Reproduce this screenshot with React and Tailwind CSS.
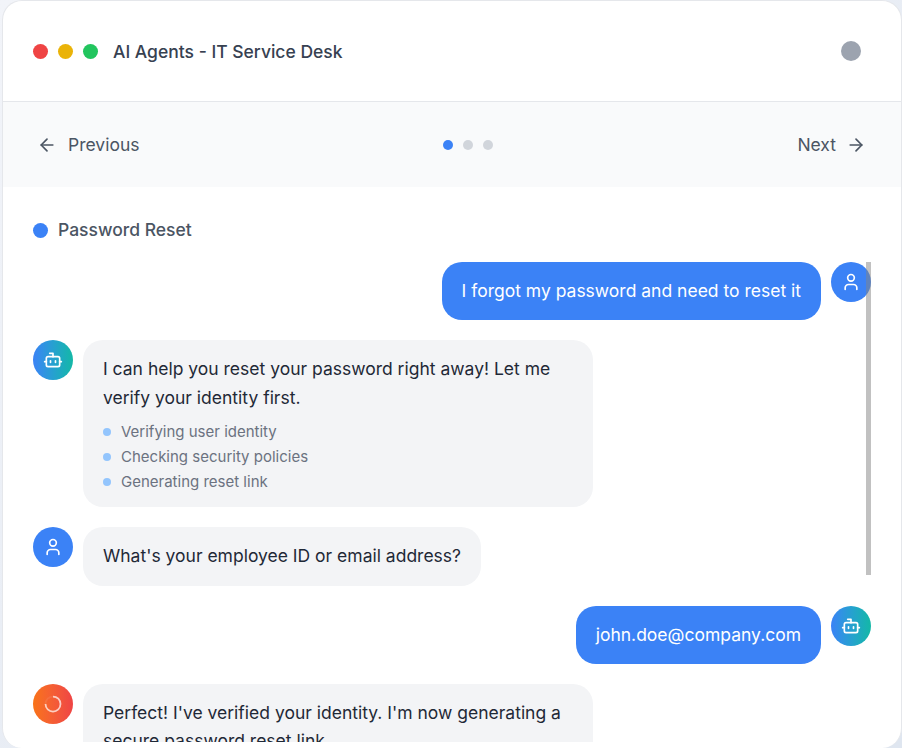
import { ArrowLeft, ArrowRight, Bot, User } from 'lucide-react';

const Avatar = ({ kind }) => {
  if (kind === 'bot') {
    return (
      <div className="w-10 h-10 shrink-0 rounded-full bg-gradient-to-r from-[#3b82f6] to-[#14b8a6] flex items-center justify-center text-white">
        <Bot className="w-5 h-5" strokeWidth={2} />
      </div>
    );
  }
  if (kind === 'busy') {
    return (
      <div className="w-10 h-10 shrink-0 rounded-full bg-gradient-to-r from-[#f97316] to-[#ef4444] flex items-center justify-center">
        <svg className="w-5 h-5" viewBox="0 0 20 20" fill="none">
          <circle cx="10" cy="10" r="7.5" stroke="white" strokeOpacity="0.08" strokeWidth="1.75" />
          <path d="M10 2.5a7.5 7.5 0 1 1-7.5 7.5" stroke="white" strokeOpacity="0.68" strokeWidth="1.75" />
        </svg>
      </div>
    );
  }
  return (
    <div className="w-10 h-10 shrink-0 rounded-full bg-[#3b82f6] flex items-center justify-center text-white">
      <User className="w-5 h-5" strokeWidth={2} />
    </div>
  );
};

const Sent = ({ avatar, children }) => (
  <div className="flex justify-end gap-[10px]">
    <div className="bg-[#3b82f6] text-white rounded-[20px] px-5 py-[15px]">{children}</div>
    <Avatar kind={avatar} />
  </div>
);

const Received = ({ avatar, children, className = '' }) => (
  <div className="flex gap-[10px]">
    <Avatar kind={avatar} />
    <div className={`bg-[#f3f4f6] text-[#1f2937] rounded-[20px] px-5 py-[15px] ${className}`}>{children}</div>
  </div>
);

const Step = ({ children }) => (
  <li className="flex items-center gap-[10px] h-[25px] text-[15px] text-[#6b7280]">
    <span className="w-2 h-2 rounded-full bg-[#93c5fd]" />
    {children}
  </li>
);

export default function App() {
  return (
    <div className="h-[748px] overflow-hidden bg-gradient-to-br from-[#f2f4f9] to-[#dfe6f0] pl-[2px] font-['Inter',sans-serif] text-[17.5px] leading-[28.16px]">
      <div className="relative h-[748px] bg-white rounded-[20px] border border-b-0 border-[#e5e7eb] overflow-hidden flex flex-col">
        <header className="h-[101px] shrink-0 flex items-center justify-between pl-[30px] pr-[40px] border-b border-[#e5e7eb]">
          <div className="flex items-center gap-[10px]">
            <span className="w-[15px] h-[15px] rounded-full bg-[#ef4444]" />
            <span className="w-[15px] h-[15px] rounded-full bg-[#eab308]" />
            <span className="w-[15px] h-[15px] rounded-full bg-[#22c55e]" />
            <span className="ml-[5px] pt-[2px] text-[#374151] font-medium">AI Agents - IT Service Desk</span>
          </div>
          <span className="w-5 h-5 rounded-full bg-[#9ca3af]" />
        </header>

        <nav className="h-[85px] shrink-0 bg-[#f9fafb] flex items-center justify-between pl-[34px] pr-[35px] text-[#4b5563]">
          <div className="flex items-center gap-[11px]">
            <ArrowLeft className="w-5 h-5" />
            <span className="pt-px">Previous</span>
          </div>
          <div className="flex gap-[10px]">
            <span className="w-[10px] h-[10px] rounded-full bg-[#3b82f6]" />
            <span className="w-[10px] h-[10px] rounded-full bg-[#d1d5db]" />
            <span className="w-[10px] h-[10px] rounded-full bg-[#d1d5db]" />
          </div>
          <div className="flex items-center gap-[10px]">
            <span className="pt-px">Next</span>
            <ArrowRight className="w-5 h-5" />
          </div>
        </nav>

        <div className="px-[30px] pt-[29px]">
          <div className="flex items-center gap-[10px] text-[#4b5563] font-medium mb-[18px]">
            <span className="w-[15px] h-[15px] rounded-full bg-[#3b82f6]" />
            Password Reset
          </div>
          <div className="h-[480px] overflow-hidden flex flex-col gap-5">
            <Sent avatar="user">I forgot my password and need to reset it</Sent>
            <Received avatar="bot" className="w-[510px] !pt-[15.1px] !pb-[12.65px]">
              I can help you reset your password right away! Let me verify your identity first.
              <ul className="mt-2">
                <Step>Verifying user identity</Step>
                <Step>Checking security policies</Step>
                <Step>Generating reset link</Step>
              </ul>
            </Received>
            <Received avatar="user">What's your employee ID or email address?</Received>
            <Sent avatar="bot">john.doe@company.com</Sent>
            <Received avatar="busy" className="w-[510px]">
              Perfect! I've verified your identity. I'm now generating a secure password reset link.
            </Received>
          </div>
        </div>

        {/* scrollbar thumb sits on top of the chat */}
        <div className="absolute left-[863px] top-[261px] w-[5px] h-[313px] bg-[#838383]/50" />
      </div>
    </div>
  );
}
